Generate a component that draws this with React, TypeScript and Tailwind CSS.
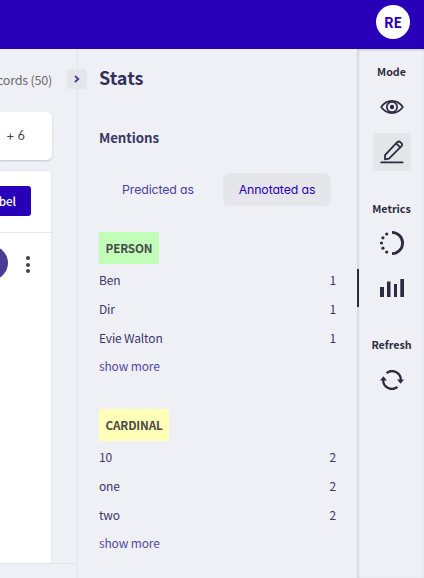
const sans = "font-['Noto_Sans_CJK_SC',sans-serif]";
const geometric = "font-[Inter,sans-serif] [font-feature-settings:'cv11','cv03','ss03']";

type Mention = { text: string; count: number };

function EyeIcon() {
  return (
    <svg width="24" height="24" viewBox="0 0 24 24" fill="none" stroke="#2d2b40" strokeWidth="1.7">
      <path d="M1.2 12C4 8 7.8 5.9 12 5.9S20 8 22.8 12C20 16 16.2 18.1 12 18.1S4 16 1.2 12Z" strokeLinejoin="round" />
      <circle cx="12" cy="12" r="5.2" />
      <circle cx="12" cy="12" r="2.2" fill="#2d2b40" stroke="none" />
    </svg>
  );
}

function PencilIcon() {
  return (
    <svg width="24" height="24" viewBox="0 0 24 24" fill="none" stroke="#2d2b40" strokeWidth="1.8" strokeLinejoin="round" strokeLinecap="round">
      <path d="M1.2 22.4H22.6" />
      <path d="M5 19.4V15.2L17.2 2.2Q18.9 0.8 20.6 2.3L21.4 3.1Q22.8 4.6 21.5 6.1L9 18.7Z" />
      <path d="M16.2 3.4L20.2 7.4" />
    </svg>
  );
}

function ProgressIcon() {
  return (
    <svg width="26" height="26" viewBox="0 0 26 26">
      <path d="M13 2.4A10.3 10.3 0 0 1 13 23.6" fill="none" stroke="#2d2b40" strokeWidth="2.8" />
      <g fill="#2d2b40">
        <circle cx="7.7" cy="4" r="1.6" />
        <circle cx="3.9" cy="7.8" r="1.6" />
        <circle cx="2.5" cy="13" r="1.6" />
        <circle cx="3.9" cy="18.2" r="1.6" />
        <circle cx="7.7" cy="22" r="1.6" />
      </g>
    </svg>
  );
}

function BarsIcon() {
  return (
    <svg width="24" height="18" viewBox="0 0 24 18" fill="#2d2b40">
      <path d="M0 8H4V18H0ZM7 2.5H10.5V18H7ZM14 5H17V18H14ZM20.3 0H24V18H20.3Z" />
    </svg>
  );
}

function RefreshIcon() {
  return (
    <svg width="24" height="20" viewBox="0 0 24 20" fill="none" stroke="#2d2b40" strokeWidth="2.3">
      <path d="M6.6 3.1A8.7 8.7 0 0 1 20.7 11" />
      <path d="M17.4 16.9A8.7 8.7 0 0 1 3.3 9" />
      <path d="M17 9.4H24L20.6 13.8ZM0 10.6H7L3.4 6.2Z" fill="#2d2b40" stroke="none" />
    </svg>
  );
}

function MentionGroup({ label, color, items }: { label: string; color: string; items: Mention[] }) {
  return (
    <section className="text-[12px] tracking-[-0.15px] text-[#3b3767]">
      <span className={`flex h-8 w-fit items-center px-[6.5px] pb-px text-[11.7px] font-bold text-[#4a4a4a] ${color}`}>{label}</span>
      <ul className="mt-[2px]">
        {items.map((item) => (
          <li key={item.text} className="flex h-[28.7px] items-center justify-between">
            <span>{item.text}</span>
            <span>{item.count}</span>
          </li>
        ))}
        <li className="flex h-[28.7px] items-center pb-px text-[#5449a5]">show more</li>
      </ul>
    </section>
  );
}

export default function App() {
  return (
    <div className={`flex h-[578px] w-[424px] flex-col overflow-hidden bg-[#eff0f6] leading-none ${sans}`}>
      <header className="flex h-[49px] shrink-0 justify-end bg-[#2800ba] pt-[5px] pr-[14px]">
        <div className="flex size-[34px] items-center justify-center rounded-full bg-white text-[14px] font-bold text-[#2800ba]">RE</div>
      </header>
      <div className="flex min-h-0 flex-1">
        <main className="flex w-[77px] shrink-0 flex-col">
          <div className="flex h-[63px] w-[52px] shrink-0 items-center justify-end pb-px text-[12.6px] tracking-[-0.25px] whitespace-nowrap text-[#6b6b70]">
            cords (50)
          </div>
          <div className={`flex h-12 w-[52px] shrink-0 items-center rounded-r-[5px] bg-white pb-px pl-[6px] text-[13px] tracking-[-0.4px] whitespace-nowrap text-[#4a4a4a] shadow-[0_1px_2px_rgba(0,0,0,0.18)] ${geometric}`}>
            + 6
          </div>
          <section className="mt-[10px] flex w-[52px] flex-1 flex-col rounded-tr-[4px] border-t border-r border-[#e6e6ea] bg-white">
            <div className="flex h-[62px] items-center border-b border-[#e6e6ea] pb-px">
              <button className="flex h-[30px] w-[31px] items-center justify-end rounded-r-[3px] bg-[#2800ba] pr-[15px] text-[11.7px] font-medium tracking-[-0.1px] text-white">
                bel
              </button>
            </div>
            <div className="flex pt-[13px]">
              <div className="-ml-[26px] size-[34px] shrink-0 rounded-full bg-[#4a3d96]" />
              <div className="mt-[10px] ml-[18px] flex flex-col gap-[2.5px]">
                <i className="size-1 rounded-full bg-[#404040]" />
                <i className="size-1 rounded-full bg-[#404040]" />
                <i className="size-1 rounded-full bg-[#404040]" />
              </div>
            </div>
          </section>
          <div className="h-[15px] shrink-0 border-t border-[#e4e4ea]" />
        </main>
        <aside className="relative w-[280px] shrink-0 border-l border-[#e4e4ea] px-[21px]">
          <button className="absolute top-5 -left-[11px] flex size-5 items-center justify-center rounded-[3px] bg-[#e5e6ea]">
            <svg width="6" height="8" viewBox="0 0 6 8" fill="none" stroke="#4a3d9e" strokeWidth="1.9">
              <path d="M1 1L4.3 4L1 7" />
            </svg>
          </button>
          <h1 className="flex h-[60px] items-center pb-[4px] text-[18px] font-bold text-[#332e5c]">Stats</h1>
          <h2 className="flex h-[60px] items-center pb-[3px] text-[13.3px] font-bold tracking-[-0.1px] text-[#3b3767]">Mentions</h2>
          <div className={`mt-1 flex gap-[14px] pl-2 text-[12.3px] tracking-[-0.1px] ${geometric}`}>
            <button className="flex h-[33px] w-[102px] items-center justify-center pt-px whitespace-nowrap text-[#4a3d9e]">Predicted as</button>
            <button className="flex h-[33px] w-[108px] items-center justify-center rounded-[6px] bg-[#e5e6ea] pt-px whitespace-nowrap text-[#2800ba]">Annotated as</button>
          </div>
          <div className="mt-[26px] flex flex-col gap-[28.2px]">
            <MentionGroup
              label="PERSON"
              color="bg-[#c2ffb8]"
              items={[
                { text: "Ben", count: 1 },
                { text: "Dir", count: 1 },
                { text: "Evie Walton", count: 1 },
              ]}
            />
            <MentionGroup
              label="CARDINAL"
              color="bg-[#ffffb8]"
              items={[
                { text: "10", count: 2 },
                { text: "one", count: 2 },
                { text: "two", count: 2 },
              ]}
            />
          </div>
        </aside>
        <nav className="relative flex flex-1 flex-col items-center pl-[2px] text-[10.7px] font-bold text-[#2d2b40] shadow-[inset_1px_1px_3px_rgba(0,0,0,0.16)]">
          <p className="mt-[15px] flex h-4 items-center">Mode</p>
          <div className="mt-[15px] flex size-6 items-center justify-center"><EyeIcon /></div>
          <div className="mt-[14px] flex size-[38px] items-center justify-center rounded-[5px] bg-[#e5e6ea]"><PencilIcon /></div>
          <p className="mt-[30px] flex h-4 items-center">Metrics</p>
          <div className="mt-[13px]"><ProgressIcon /></div>
          <div className="mt-[23px]"><BarsIcon /></div>
          <p className="mt-[40px] flex h-4 items-center">Refresh</p>
          <div className="mt-[17px]"><RefreshIcon /></div>
          <span className="absolute top-[220px] left-0 h-[38px] w-[2px] bg-[#2d2b40]" />
        </nav>
      </div>
    </div>
  );
}
